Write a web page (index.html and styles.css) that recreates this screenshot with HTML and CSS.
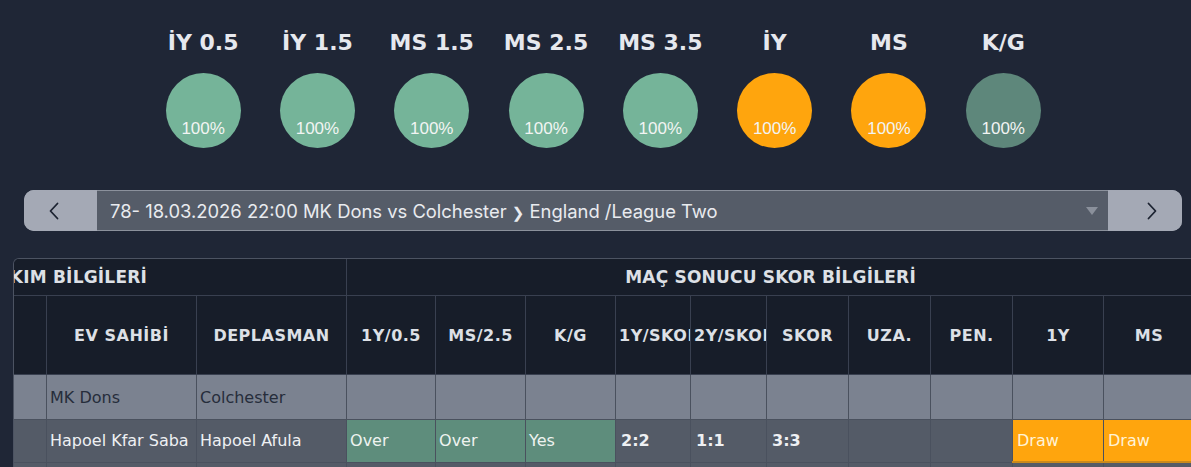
FILE: index.html
```html
<!DOCTYPE html>
<html lang="tr">
<head>
<meta charset="utf-8">
<link rel="stylesheet" href="styles.css">
</head>
<body>
<div class="stats">
  <div class="stat"><div class="stat-label">İY 0.5</div><div class="dot green"><span>100%</span></div></div>
  <div class="stat"><div class="stat-label">İY 1.5</div><div class="dot green"><span>100%</span></div></div>
  <div class="stat"><div class="stat-label">MS 1.5</div><div class="dot green"><span>100%</span></div></div>
  <div class="stat"><div class="stat-label">MS 2.5</div><div class="dot green"><span>100%</span></div></div>
  <div class="stat"><div class="stat-label">MS 3.5</div><div class="dot green"><span>100%</span></div></div>
  <div class="stat"><div class="stat-label">İY</div><div class="dot orange"><span>100%</span></div></div>
  <div class="stat"><div class="stat-label">MS</div><div class="dot orange"><span>100%</span></div></div>
  <div class="stat"><div class="stat-label">K/G</div><div class="dot teal"><span>100%</span></div></div>
</div>

<div class="selector">
  <button class="nav-btn prev" aria-label="previous">
    <svg width="10" height="18" viewBox="0 0 10 18"><path d="M8.5 1.5 L1.5 9 L8.5 16.5" fill="none" stroke="#1c2331" stroke-width="1.8" stroke-linecap="round" stroke-linejoin="round"/></svg>
  </button>
  <div class="select-box">
    <span class="select-text">78- 18.03.2026 22:00 MK Dons vs Colchester <span class="sep">❯</span> England /League Two</span>
    <svg class="caret" width="12" height="8" viewBox="0 0 12 8"><path d="M0 0 H12 L6 8 Z" fill="#8a909b"/></svg>
  </div>
  <button class="nav-btn next" aria-label="next">
    <svg width="10" height="18" viewBox="0 0 10 18"><path d="M1.5 1.5 L8.5 9 L1.5 16.5" fill="none" stroke="#1c2331" stroke-width="1.8" stroke-linecap="round" stroke-linejoin="round"/></svg>
  </button>
</div>

<div class="table-wrap">
  <table class="grid">
    <colgroup>
      <col class="c-no"><col class="c-team"><col class="c-team">
      <col class="c-89"><col class="c-90"><col class="c-90">
      <col class="c-75"><col class="c-76"><col class="c-82"><col class="c-82"><col class="c-82">
      <col class="c-91"><col class="c-91">
    </colgroup>
    <thead>
      <tr class="group-row">
        <th colspan="3" class="group-left">TAKIM BİLGİLERİ</th>
        <th colspan="10">MAÇ SONUCU SKOR BİLGİLERİ</th>
      </tr>
      <tr class="head-row">
        <th></th>
        <th>EV SAHİBİ</th>
        <th>DEPLASMAN</th>
        <th>1Y/0.5</th>
        <th>MS/2.5</th>
        <th>K/G</th>
        <th class="clip">1Y/SKOR</th>
        <th class="clip">2Y/SKOR</th>
        <th>SKOR</th>
        <th>UZA.</th>
        <th>PEN.</th>
        <th>1Y</th>
        <th>MS</th>
      </tr>
    </thead>
    <tbody>
      <tr class="row-light">
        <td></td><td>MK Dons</td><td>Colchester</td>
        <td></td><td></td><td></td><td></td><td></td><td></td><td></td><td></td><td></td><td></td>
      </tr>
      <tr class="row-dark">
        <td></td><td>Hapoel Kfar Saba</td><td>Hapoel Afula</td>
        <td class="hit">Over</td><td class="hit">Over</td><td class="hit">Yes</td>
        <td class="score">2:2</td><td class="score">1:1</td><td class="score">3:3</td>
        <td></td><td></td>
        <td class="draw">Draw</td><td class="draw">Draw</td>
      </tr>
      <tr class="row-dark">
        <td></td><td></td><td></td><td></td><td></td><td></td><td></td><td></td><td></td><td></td><td></td><td></td><td></td>
      </tr>
    </tbody>
  </table>
</div>
</body>
</html>
```

FILE: styles.css
```css
html, body {
  margin: 0;
  padding: 0;
  background: #1f2636;
  overflow: hidden;
}

body {
  width: 1191px;
  height: 467px;
  font-family: "DejaVu Sans", Verdana, sans-serif;
}

/* ---------- stats ---------- */
.stats {
  display: flex;
  padding-left: 146px;
  padding-top: 30px;
}

.stat {
  width: 114.3px;
  display: flex;
  flex-direction: column;
  align-items: center;
}

.stat-label {
  font-family: "DejaVu Sans", sans-serif;
  font-weight: bold;
  font-size: 22px;
  line-height: 26px;
  color: #e6e8ee;
  white-space: nowrap;
}

.dot {
  margin-top: 17px;
  width: 75px;
  height: 75px;
  border-radius: 50%;
  display: flex;
  align-items: flex-end;
  justify-content: center;
  box-sizing: border-box;
  padding-bottom: 9px;
}

.dot span {
  font-family: "Liberation Sans", Arial, sans-serif;
  font-size: 17px;
  line-height: 20px;
  color: #f2f4f3;
}

.green { background: #75b499; }
.orange { background: #ffa50d; }
.teal { background: #5e877b; }

/* ---------- selector ---------- */
.selector {
  margin: 42px 9px 0 24px;
  height: 41px;
  display: flex;
  border-radius: 10px;
  overflow: hidden;
  background: #a4a9b5;
}

.nav-btn {
  width: 73px;
  border: 0;
  padding: 0;
  background: #a4a9b5;
  display: flex;
  align-items: center;
}

.nav-btn.prev {
  justify-content: flex-start;
  padding-left: 25px;
}

.nav-btn.next {
  width: 74px;
  justify-content: flex-end;
  padding-right: 25px;
}

.nav-btn svg { display: block; }

.select-box {
  flex: 1;
  background: #555c68;
  border-top: 1px solid #8b919c;
  border-bottom: 1px solid #8b919c;
  display: flex;
  align-items: center;
  padding: 0 10px 0 13px;
}

.select-text {
  flex: 1;
  font-family: Inter, "Liberation Sans", sans-serif;
  font-size: 18.4px;
  color: #e9ebef;
  white-space: nowrap;
}

.select-text .sep {
  font-family: "DejaVu Sans", sans-serif;
  font-size: 15px;
  font-weight: bold;
}

.caret { display: block; }

/* ---------- table ---------- */
.table-wrap {
  margin: 27px 0 0 13px;
  border: 1.5px solid #4c5362;
  border-right: 0;
  border-bottom: 0;
  border-top-left-radius: 6px;
  overflow: hidden;
  height: 220px;
}

.grid {
  margin-left: -35px;
  border-collapse: collapse;
  table-layout: fixed;
  width: 1215px;
}

.c-no { width: 67px; }
.c-team { width: 150px; }
.c-89 { width: 89px; }
.c-90 { width: 90px; }
.c-75 { width: 75px; }
.c-76 { width: 76px; }
.c-82 { width: 82px; }
.c-91 { width: 91px; }

.grid th {
  background: #171d29;
  color: #dde0e6;
  font-weight: bold;
  border: 1.5px solid #394050;
  white-space: nowrap;
  overflow: hidden;
  padding: 0;
}

.group-row th {
  height: 36px;
  font-size: 17px;
  text-align: center;
  border-top: 0;
  letter-spacing: 0.2px;
}

.group-row th.group-left {
  text-align: left;
  padding-left: 6px;
}

.head-row th {
  height: 78px;
  font-size: 16px;
  letter-spacing: 0.5px;
  text-align: center;
}

.head-row th.clip {
  text-align: left;
  padding-left: 3px;
  text-overflow: clip;
}

.grid td {
  padding: 0 3px;
  font-size: 16px;
  white-space: nowrap;
  overflow: hidden;
  border: 1px solid #4a515e;
}

.row-light td {
  height: 44px;
  background: #7b8290;
  color: #262d3b;
}

.row-dark td {
  height: 41px;
  background: #545b67;
  color: #eef0f3;
}

.row-dark td.hit {
  background: #5e8d7c;
  color: #eef3f0;
}

.row-dark td.score {
  font-weight: bold;
  padding-left: 5px;
}

.row-dark td.draw {
  background: #ffa50d;
  color: #fff3d6;
  padding-left: 4px;
  border-bottom: 2px solid #c98a1c;
}
```
